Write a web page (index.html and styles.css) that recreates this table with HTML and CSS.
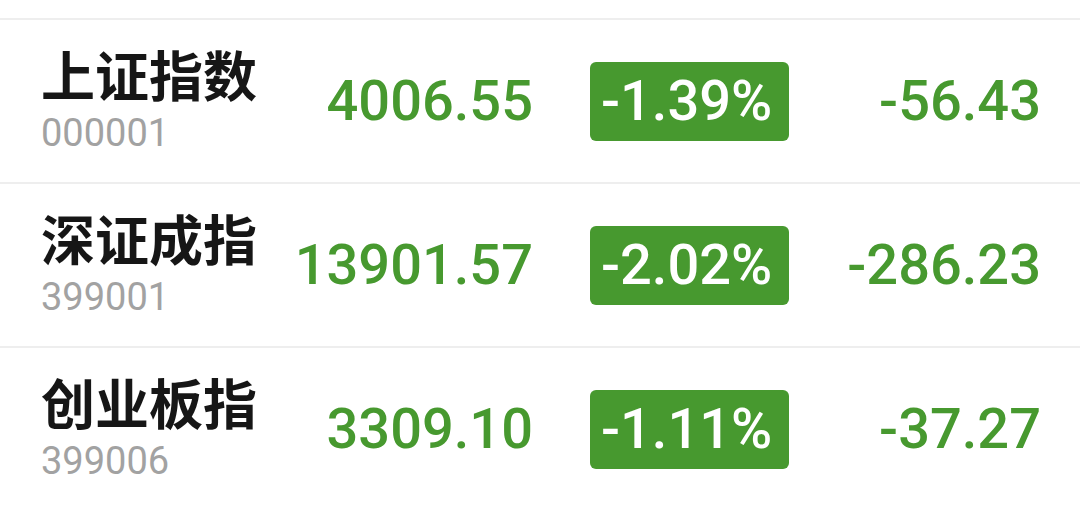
FILE: index.html
```html
<!DOCTYPE html>
<html lang="zh">
<head>
<meta charset="utf-8">
<link rel="stylesheet" href="styles.css">
</head>
<body>
<div class="list">
  <div class="row">
    <div class="name"><div class="title">上证指数</div><div class="code">000001</div></div>
    <div class="price">4006.55</div>
    <div class="badge">-1.39%</div>
    <div class="change">-56.43</div>
  </div>
  <div class="row">
    <div class="name"><div class="title">深证成指</div><div class="code">399001</div></div>
    <div class="price">13901.57</div>
    <div class="badge">-2.02%</div>
    <div class="change">-286.23</div>
  </div>
  <div class="row">
    <div class="name"><div class="title">创业板指</div><div class="code">399006</div></div>
    <div class="price">3309.10</div>
    <div class="badge">-1.11%</div>
    <div class="change">-37.27</div>
  </div>
</div>
</body>
</html>
```

FILE: styles.css
```css
html, body {
  margin: 0;
  background: #ffffff;
}
.list {
  padding-top: 18px;
}
.row {
  box-sizing: border-box;
  height: 164px;
  border-top: 2px solid #eeeeee;
  display: flex;
  align-items: center;
  padding-left: 41px;
}
.name {
  width: 242px;
  margin-bottom: 4px;
  display: flex;
  flex-direction: column;
  flex: none;
}
.title {
  font-family: "Noto Sans CJK SC", sans-serif;
  font-weight: 700;
  font-size: 54px;
  line-height: 54px;
  color: #161616;
}
.code {
  margin-top: 13px;
  font-family: Roboto, "Liberation Sans", sans-serif;
  font-size: 38px;
  line-height: 38px;
  color: #a2a2a2;
}
.price, .change, .badge {
  font-family: Roboto, "Liberation Sans", sans-serif;
  font-weight: 500;
  font-size: 56px;
  line-height: 79px;
  flex: none;
}
.price {
  width: 250px;
  text-align: right;
  color: #47992f;
}
.badge {
  box-sizing: border-box;
  width: 199px;
  height: 79px;
  margin-left: 57px;
  padding-left: 11px;
  background: #47992f;
  color: #ffffff;
  border-radius: 6px;
}
.change {
  width: 252px;
  text-align: right;
  color: #47992f;
}
```
